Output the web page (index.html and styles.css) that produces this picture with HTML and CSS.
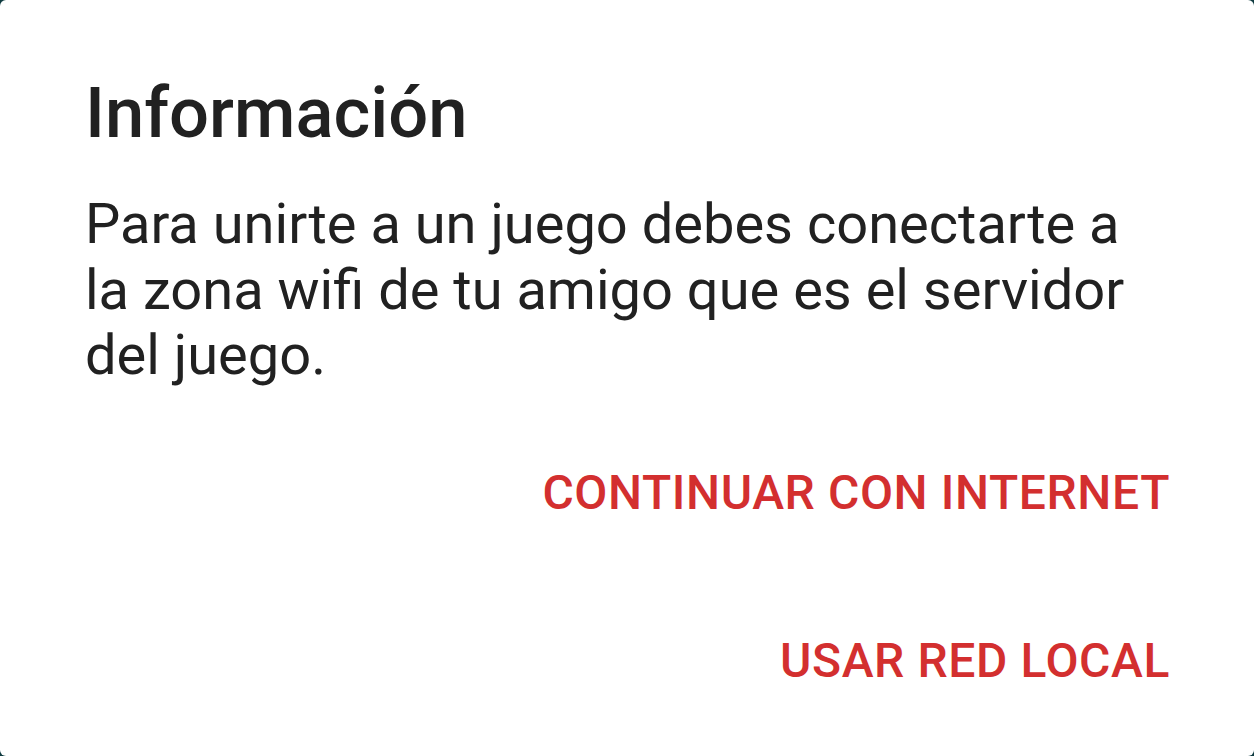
FILE: index.html
```html
<!DOCTYPE html>
<html lang="es">
<head>
<meta charset="utf-8">
<title>Información</title>
<link rel="stylesheet" href="styles.css">
</head>
<body>
<div class="dialog">
  <h1 class="title">Información</h1>
  <p class="message">Para unirte a un juego debes conectarte a la zona wifi de tu amigo que es el servidor del juego.</p>
  <div class="actions">
    <button class="action">Continuar con Internet</button>
    <button class="action">Usar red local</button>
  </div>
</div>
</body>
</html>
```

FILE: styles.css
```css
html, body {
  margin: 0;
  padding: 0;
  background: #0f3b40;
}

body {
  width: 1254px;
  height: 756px;
  overflow: hidden;
  font-family: Roboto, "Noto Sans", sans-serif;
}

.dialog {
  box-sizing: border-box;
  width: 1254px;
  height: 756px;
  background: #ffffff;
  border-radius: 6px;
  padding: 73px 84px 0 85px;
  display: flex;
  flex-direction: column;
}

.title {
  margin: 0;
  font-size: 70.5px;
  font-weight: 500;
  line-height: 81px;
  color: #212121;
  letter-spacing: 0;
}

.message {
  margin: 38px 0 0 0;
  font-size: 56px;
  font-weight: 400;
  line-height: 65.5px;
  color: #212121;
  max-width: 1064px;
}

.actions {
  margin-top: 20px;
  display: flex;
  flex-direction: column;
  align-items: flex-end;
}

.action {
  box-sizing: border-box;
  height: 168px;
  padding: 56px 0;
  margin: 0;
  border: none;
  background: transparent;
  font-family: Roboto, "Noto Sans", sans-serif;
  font-size: 48px;
  font-weight: 500;
  line-height: 56px;
  text-transform: uppercase;
  color: #d32f2f;
  letter-spacing: 0.6px;
}
```
